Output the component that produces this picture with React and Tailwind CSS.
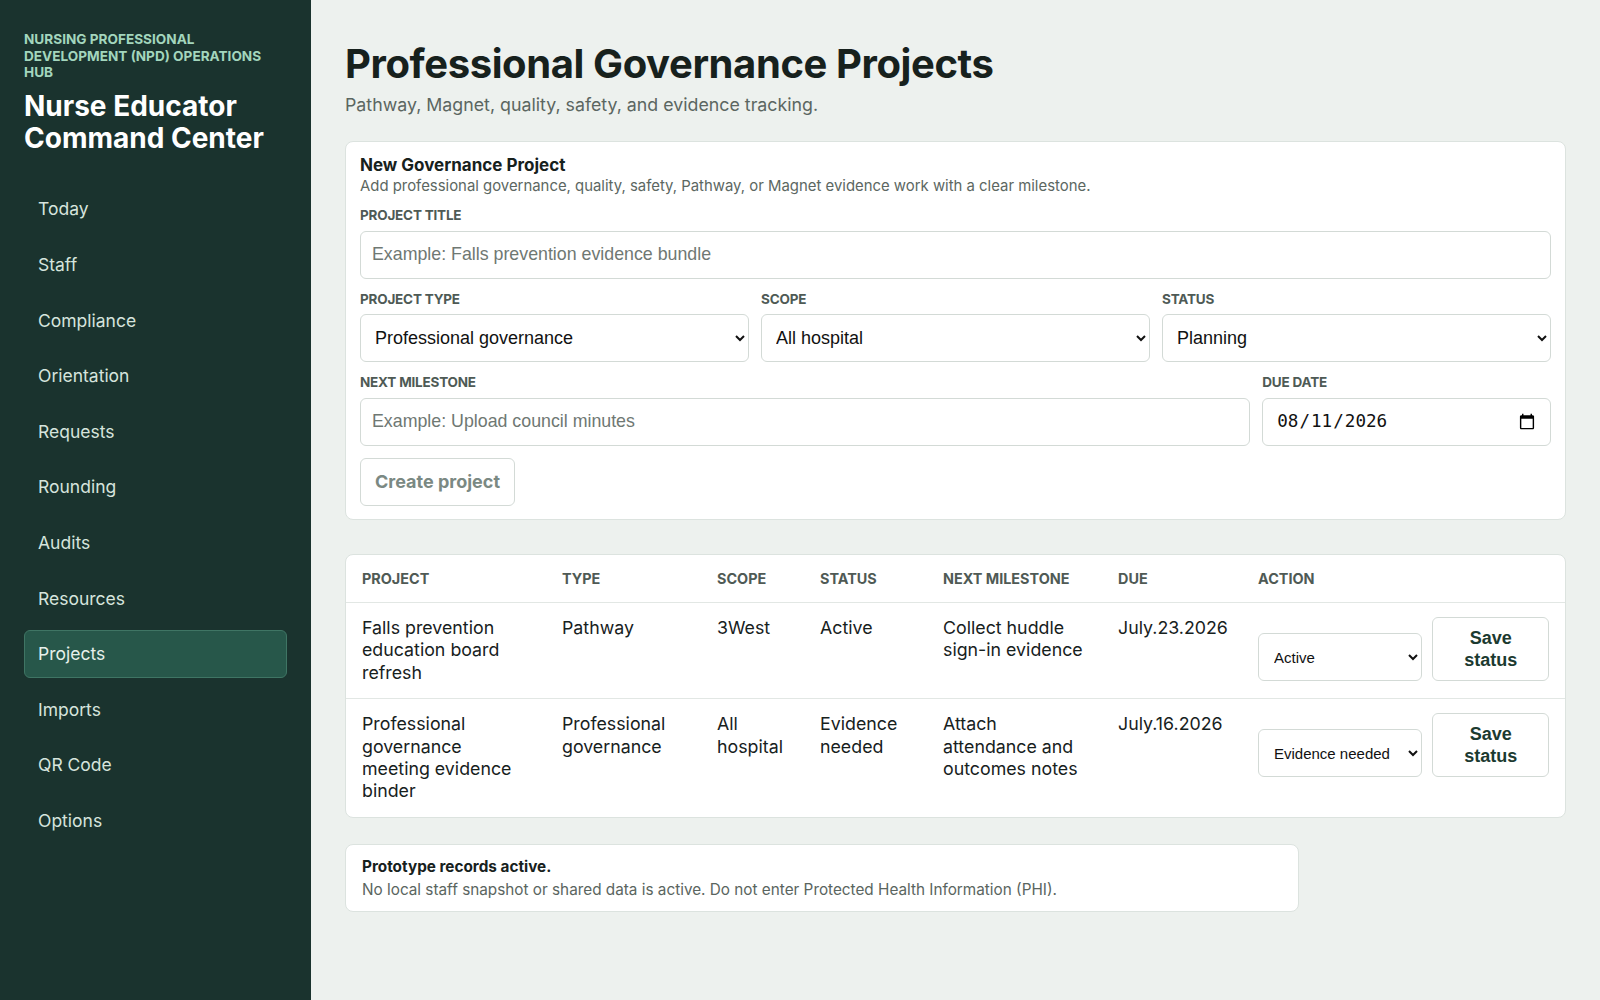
import React from "react";

const navItems = [
  "Today",
  "Staff",
  "Compliance",
  "Orientation",
  "Requests",
  "Rounding",
  "Audits",
  "Resources",
  "Projects",
  "Imports",
  "QR Code",
  "Options",
];

const projects = [
  {
    title: "Falls prevention education board refresh",
    type: "Pathway",
    scope: "3West",
    status: "Active",
    milestone: "Collect huddle sign-in evidence",
    due: "July.23.2026",
  },
  {
    title: "Professional governance meeting evidence binder",
    type: "Professional governance",
    scope: "All hospital",
    status: "Evidence needed",
    milestone: "Attach attendance and outcomes notes",
    due: "July.16.2026",
  },
];

const statusOptions = ["Planning", "Active", "Evidence needed", "Complete"];

const Label = ({ children }) => (
  <div className="text-[13.5px] leading-[16px] font-bold uppercase text-[#4e5a55] tracking-[-0.2px] mb-[7.5px]">
    {children}
  </div>
);

const inputClass =
  "w-full h-[48px] rounded-[6px] border border-[#d3dad6] bg-white px-[11px] text-[17.8px] text-[#111] font-['Liberation_Sans',Arial,sans-serif] placeholder:text-[#6f7873] outline-none";

const selectClass =
  "w-full h-[48px] rounded-[6px] border border-[#d3dad6] bg-white px-[10px] text-[18px] text-[#111] font-['Liberation_Sans',Arial,sans-serif] outline-none";

const Sidebar = () => (
  <aside className="w-[311px] shrink-0 bg-[#1a332e] px-[24px] pt-[31px]">
    <p className="text-[13.6px] leading-[16.5px] font-bold uppercase text-[#a3d6bd]">
      Nursing Professional Development (NPD) Operations Hub
    </p>
    <h1 className="mt-[9px] text-[28px] leading-[32px] font-bold text-white">
      Nurse Educator Command Center
    </h1>
    <nav className="mt-[32px] flex flex-col gap-[7.6px]">
      {navItems.map((item) => (
        <div
          key={item}
          className={
            item === "Projects"
              ? "h-[48px] flex items-center px-[13px] rounded-[6px] border border-[#3f7564] bg-[#27574a] text-[17.5px] text-[#e6f0eb]"
              : "h-[48px] flex items-center px-[13px] rounded-[6px] border border-transparent text-[17.5px] text-[#d6e4dd]"
          }
        >
          {item}
        </div>
      ))}
    </nav>
  </aside>
);

const NewProjectForm = () => (
  <section className="mt-[23px] rounded-[8px] border border-[#dce3df] bg-white px-[14px] pt-[12px] pb-[13px]">
    <h2 className="text-[17px] leading-[22px] font-bold text-[#17211d]">New Governance Project</h2>
    <p className="text-[14.9px] leading-[20px] text-[#5c6762]">
      Add professional governance, quality, safety, Pathway, or Magnet evidence work with a clear milestone.
    </p>
    <div className="mt-[11px]">
      <Label>Project title</Label>
      <input className={inputClass} placeholder="Example: Falls prevention evidence bundle" />
    </div>
    <div className="mt-[12px] grid grid-cols-3 gap-[12px]">
      <div>
        <Label>Project type</Label>
        <select className={selectClass} defaultValue="Professional governance">
          <option>Professional governance</option>
          <option>Pathway</option>
          <option>Magnet</option>
          <option>Quality</option>
          <option>Safety</option>
        </select>
      </div>
      <div>
        <Label>Scope</Label>
        <select className={selectClass} defaultValue="All hospital">
          <option>All hospital</option>
          <option>3West</option>
        </select>
      </div>
      <div>
        <Label>Status</Label>
        <select className={selectClass} defaultValue="Planning">
          {statusOptions.map((s) => (
            <option key={s}>{s}</option>
          ))}
        </select>
      </div>
    </div>
    <div className="mt-[12px] grid grid-cols-4 gap-[12px]">
      <div className="col-span-3">
        <Label>Next milestone</Label>
        <input className={inputClass} placeholder="Example: Upload council minutes" />
      </div>
      <div>
        <Label>Due date</Label>
        <input
          type="date"
          defaultValue="2026-08-11"
          className="w-full h-[48px] rounded-[6px] border border-[#d3dad6] bg-white pl-[13px] pr-[12px] text-[17.6px] text-[#111] font-['DejaVu_Sans_Mono',monospace] outline-none"
        />
      </div>
    </div>
    <button
      disabled
      className="mt-[12px] h-[48px] px-[14px] rounded-[6px] border border-[#d3dad6] bg-white text-[18px] font-bold text-[#7b8983]"
    >
      Create project
    </button>
  </section>
);

const ProjectsTable = () => (
  <section className="mt-[34.5px] rounded-[8px] border border-[#dce3df] bg-white overflow-hidden">
    <table className="w-full table-fixed border-collapse text-left">
      <colgroup>
        <col className="w-[200px]" />
        <col className="w-[155px]" />
        <col className="w-[103px]" />
        <col className="w-[123px]" />
        <col className="w-[175px]" />
        <col className="w-[140px]" />
        <col />
      </colgroup>
      <thead>
        <tr className="border-b border-[#e2e7e4]">
          {["Project", "Type", "Scope", "Status", "Next milestone", "Due", "Action"].map((h) => (
            <th
              key={h}
              className="px-[16px] py-[14px] text-[14.4px] leading-[19px] font-bold uppercase text-[#4f5a55]"
            >
              {h}
            </th>
          ))}
        </tr>
      </thead>
      <tbody className="text-[17.8px] leading-[22.4px] text-[#17211d]">
        {projects.map((p, i) => (
          <tr key={p.title} className={i === 0 ? "border-b border-[#e2e7e4]" : ""}>
            <td className="px-[16px] py-[14px] align-top">{p.title}</td>
            <td className="px-[16px] py-[14px] align-top">{p.type}</td>
            <td className="px-[16px] py-[14px] align-top">{p.scope}</td>
            <td className="px-[16px] py-[14px] align-top">{p.status}</td>
            <td className="px-[16px] py-[14px] align-top">{p.milestone}</td>
            <td className="px-[16px] py-[14px] align-top">{p.due}</td>
            <td className="px-[16px] py-[14px] align-top">
              <div className="flex items-end gap-[10px]">
                <select
                  defaultValue={p.status}
                  className="w-[165px] h-[48px] rounded-[6px] border border-[#d3dad6] bg-white px-[11px] text-[15px] text-[#111] font-['Liberation_Sans',Arial,sans-serif] outline-none"
                >
                  {statusOptions.map((s) => (
                    <option key={s}>{s}</option>
                  ))}
                </select>
                <button className="w-[117px] h-[64px] rounded-[6px] border border-[#d3dad6] bg-white text-[18px] leading-[22px] font-bold text-[#1c3a30] font-['Liberation_Sans',Arial,sans-serif]">
                  Save
                  <br />
                  status
                </button>
              </div>
            </td>
          </tr>
        ))}
      </tbody>
    </table>
  </section>
);

export default function App() {
  return (
    <div className="flex min-h-screen bg-[#edf1ee] font-['Inter','Noto_Sans',sans-serif]">
      <Sidebar />
      <main className="flex-1 px-[34px] pt-[40px] pb-[40px]">
        <h1 className="text-[40px] leading-[48px] font-bold text-[#17211d] tracking-[-0.4px]">
          Professional Governance Projects
        </h1>
        <p className="mt-[4px] text-[17.8px] leading-[26px] text-[#5b6661]">
          Pathway, Magnet, quality, safety, and evidence tracking.
        </p>
        <NewProjectForm />
        <ProjectsTable />
        <div className="mt-[26.5px] w-[954px] rounded-[8px] border border-[#dce3df] bg-white px-[16px] pt-[11px] pb-[11px]">
          <p className="text-[15.3px] leading-[21px] font-bold text-[#17211d]">Prototype records active.</p>
          <p className="mt-[2px] text-[15.3px] leading-[21px] text-[#5a6560]">
            No local staff snapshot or shared data is active. Do not enter Protected Health Information (PHI).
          </p>
        </div>
      </main>
    </div>
  );
}
